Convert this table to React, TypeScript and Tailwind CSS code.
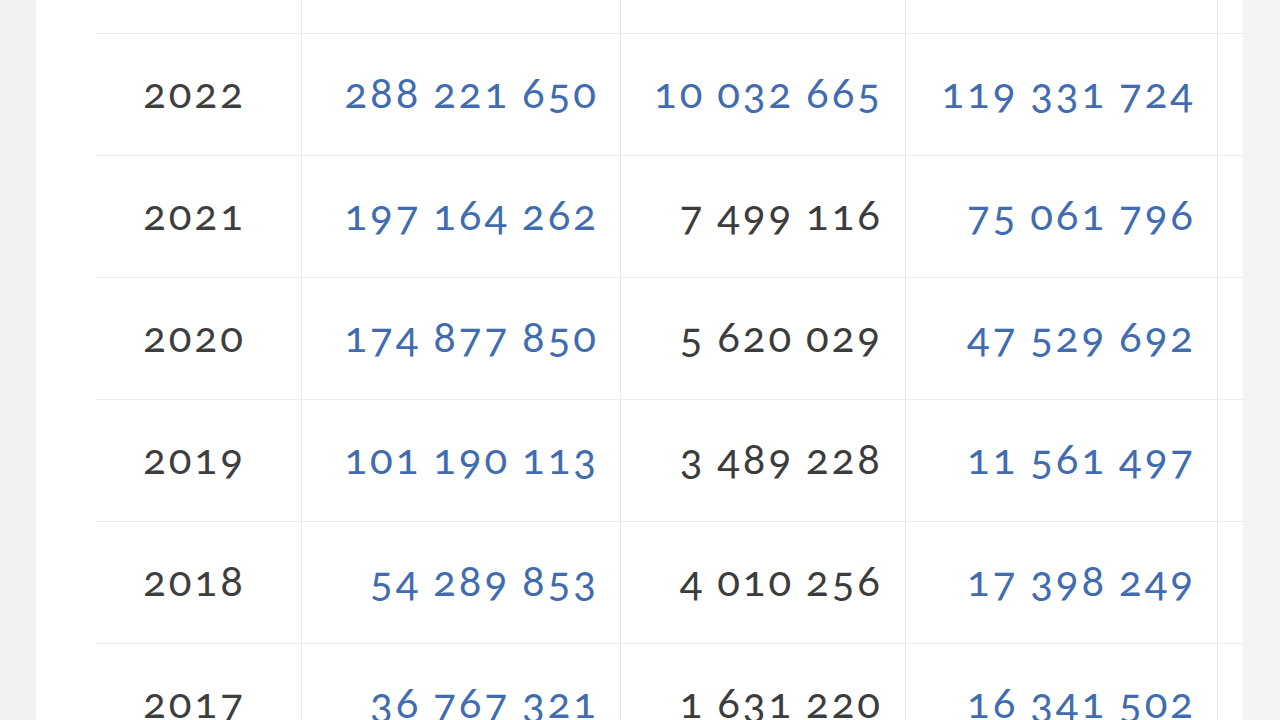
import React from "react";

type Cell = { v: string; blue: boolean };
type Row = { year: string; a: Cell; b: Cell; c: Cell };

const rows: Row[] = [
  { year: "2022", a: { v: "288 221 650", blue: true }, b: { v: "10 032 665", blue: true }, c: { v: "119 331 724", blue: true } },
  { year: "2021", a: { v: "197 164 262", blue: true }, b: { v: "7 499 116", blue: false }, c: { v: "75 061 796", blue: true } },
  { year: "2020", a: { v: "174 877 850", blue: true }, b: { v: "5 620 029", blue: false }, c: { v: "47 529 692", blue: true } },
  { year: "2019", a: { v: "101 190 113", blue: true }, b: { v: "3 489 228", blue: false }, c: { v: "11 561 497", blue: true } },
  { year: "2018", a: { v: "54 289 853", blue: true }, b: { v: "4 010 256", blue: false }, c: { v: "17 398 249", blue: true } },
  { year: "2017", a: { v: "36 767 321", blue: true }, b: { v: "1 631 220", blue: false }, c: { v: "16 341 502", blue: true } },
];

function Num({ cell, w, pr }: { cell: Cell; w: string; pr: string }) {
  return (
    <div
      className={`${w} ${pr} shrink-0 h-full border-r border-[#e3e9f3] flex items-center justify-end ${cell.blue ? "text-[#416cb0]" : "text-[#3c3c3c]"}`}
    >
      {cell.v}
    </div>
  );
}

export default function App() {
  return (
    <div className="w-[1280px] h-[720px] overflow-hidden flex bg-[#f4f4f4]">
      <div className="w-[36px] shrink-0 bg-[#f2f2f2]" />
      <div
        className="w-[1207px] shrink-0 bg-white text-[42px] font-normal tracking-[3px] [word-spacing:-2px] oldstyle-nums"
        style={{ fontFamily: "Lato, 'Open Sans', sans-serif" }}
      >
        {/* partial header row */}
        <div className="h-[34px] flex border-b border-[#e6ebf4] ml-[60px]">
          <div className="w-[206px] shrink-0 border-r border-[#e3e9f3]" />
          <div className="w-[319px] shrink-0 border-r border-[#e3e9f3]" />
          <div className="w-[285px] shrink-0 border-r border-[#e3e9f3]" />
          <div className="w-[312px] shrink-0 border-r border-[#e3e9f3]" />
        </div>
        {rows.map((r) => (
          <div key={r.year} className="h-[122px] flex border-b border-[#e6ebf4] ml-[60px]">
            <div className="w-[206px] shrink-0 h-full border-r border-[#e3e9f3] flex items-center justify-center pr-2 pb-1 text-[#3e3e3e]">
              {r.year}
            </div>
            <Num cell={r.a} w="w-[319px]" pr="pr-[21px] pb-1" />
            <Num cell={r.b} w="w-[285px]" pr="pr-[22px] pb-1" />
            <Num cell={r.c} w="w-[312px]" pr="pr-[21px] pb-1" />
          </div>
        ))}
      </div>
      <div className="flex-1 bg-[#f3f3f3]" />
    </div>
  );
}
